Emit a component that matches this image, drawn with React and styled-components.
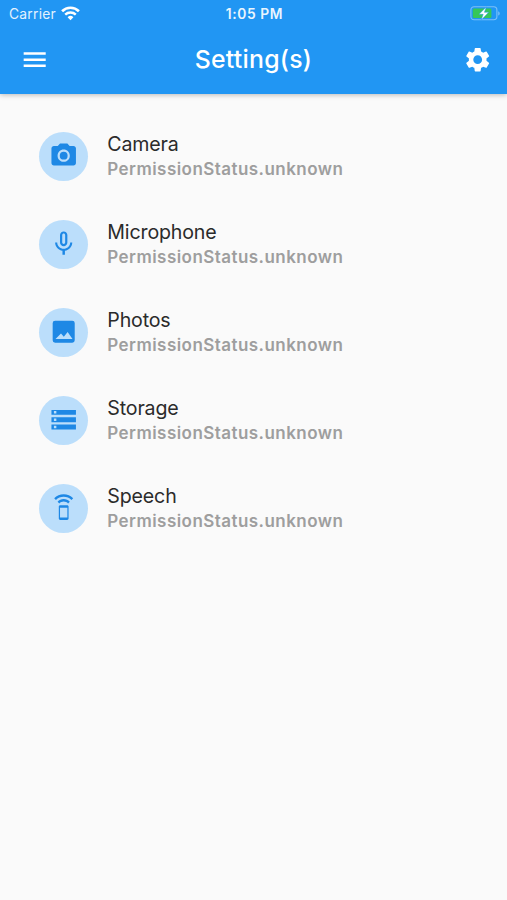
import styled, { createGlobalStyle } from "styled-components";
import {
  MdMenu,
  MdMicNone,
  MdPhotoCamera,
  MdSettings,
  MdSpeakerPhone,
  MdStorage,
} from "react-icons/md";

const GlobalStyle = createGlobalStyle`
  * {
    box-sizing: border-box;
  }
  body {
    margin: 0;
    background-color: #fafafa;
    font-family: Inter, "Liberation Sans", sans-serif;
  }
  svg {
    display: block;
  }
`;

const Page = styled.div`
  min-height: 900px;
  background-color: #fafafa;
`;

const Header = styled.header`
  height: 93.5px;
  background-color: #2196f3;
  color: #fff;
  box-shadow: 0 1px 5px rgba(0, 0, 0, 0.26);
`;

const StatusBar = styled.div`
  height: 25px;
  padding: 2px 7px 0 9px;
  display: grid;
  grid-template-columns: 1fr auto 1fr;
  align-items: center;
  font-size: 13.8px;
  line-height: 20px;
`;

const Carrier = styled.div`
  display: flex;
  align-items: center;
  gap: 5px;
  color: #e3f2fe;
  letter-spacing: 0.25px;
`;

const Clock = styled.div`
  font-weight: 600;
  font-size: 13.8px;
  letter-spacing: 0.6px;
  color: #e9f5fe;
`;

const Battery = styled.div`
  justify-self: end;
`;

const AppBar = styled.div`
  height: 68px;
  padding: 1px 15px 0 20px;
  display: grid;
  grid-template-columns: 1fr auto 1fr;
  align-items: center;
`;

const Title = styled.h1`
  margin: 0 5px 1px 0;
  font-size: 24.8px;
  line-height: 30px;
  font-weight: 500;
  letter-spacing: 0.25px;
`;

const IconButton = styled.button`
  justify-self: ${({ $end }) => ($end ? "end" : "start")};
  padding: 0;
  border: none;
  background: none;
  color: inherit;
  cursor: pointer;
  > svg {
    width: 29.4px;
    height: 29.4px;
  }
`;

const List = styled.ul`
  list-style: none;
  margin: 0;
  padding: 18.5px 38.8px 0;
`;

const Item = styled.li`
  height: 88px;
  display: flex;
  align-items: center;
  gap: 19.5px;
`;

const Avatar = styled.div`
  width: 49px;
  height: 49px;
  flex-shrink: 0;
  border-radius: 50%;
  background-color: #bbdefb;
  color: #1e88e5;
  display: flex;
  align-items: center;
  justify-content: center;
  > svg {
    width: 29.4px;
    height: 29.4px;
  }
`;

const ItemName = styled.div`
  font-size: 19.6px;
  line-height: 26px;
  letter-spacing: -0.15px;
  color: #2b2b2b;
`;

const ItemStatus = styled.div`
  font-size: 17px;
  line-height: 25px;
  font-weight: 600;
  letter-spacing: 0.45px;
  color: #9e9e9e;
`;

function WifiIcon() {
  return (
    <svg width="19" height="15" viewBox="0 0 19 15" fill="none" stroke="#fff">
      <path d="M1.1 5.2a12 12 0 0 1 16.8 0" strokeWidth="2.7" />
      <path d="M4.2 8.6a7.6 7.6 0 0 1 10.6 0" strokeWidth="2.4" />
      <path d="M9.5 14.2 6.6 11.2a4.2 4.2 0 0 1 5.8 0z" fill="#fff" stroke="none" />
    </svg>
  );
}

function BatteryIcon() {
  return (
    <svg width="30" height="15" viewBox="0 0 30 15">
      <rect x="0.9" y="0.8" width="26" height="13" rx="3.2" fill="none" stroke="#7cc0f8" strokeWidth="1.1" />
      <path d="M28.2 5.2v4.4c2-.9 2-3.5 0-4.4z" fill="#7cc0f8" />
      <rect x="2.8" y="2.5" width="18.6" height="9.6" rx="1.4" fill="#35c759" />
      <path d="M16.3 0.9 9 8.3h4.2L11.2 14 18.7 6.3h-4.3z" fill="#fff" stroke="#2196f3" strokeWidth="0.5" />
    </svg>
  );
}

function PhotoIcon() {
  return (
    <svg viewBox="0 0 24 24" fill="currentColor">
      <path
        fillRule="evenodd"
        d="M5 3h14a2 2 0 0 1 2 2v14a2 2 0 0 1-2 2H5a2 2 0 0 1-2-2V5a2 2 0 0 1 2-2zM5.3 18h13.9l-4-5.8-3.1 3.9-2.3-2.6z"
      />
    </svg>
  );
}

const permissions = [
  { name: "Camera", icon: MdPhotoCamera },
  { name: "Microphone", icon: MdMicNone },
  { name: "Photos", icon: PhotoIcon },
  { name: "Storage", icon: MdStorage },
  { name: "Speech", icon: MdSpeakerPhone },
];

function PermissionItem({ name, icon: Icon, status = "PermissionStatus.unknown" }) {
  return (
    <Item>
      <Avatar>
        <Icon />
      </Avatar>
      <div>
        <ItemName>{name}</ItemName>
        <ItemStatus>{status}</ItemStatus>
      </div>
    </Item>
  );
}

function App() {
  return (
    <Page>
      <GlobalStyle />
      <Header>
        <StatusBar>
          <Carrier>
            Carrier
            <WifiIcon />
          </Carrier>
          <Clock>1:05 PM</Clock>
          <Battery>
            <BatteryIcon />
          </Battery>
        </StatusBar>
        <AppBar>
          <IconButton aria-label="Menu">
            <MdMenu />
          </IconButton>
          <Title>Setting(s)</Title>
          <IconButton $end aria-label="Settings">
            <MdSettings />
          </IconButton>
        </AppBar>
      </Header>
      <List>
        {permissions.map((permission) => (
          <PermissionItem key={permission.name} {...permission} />
        ))}
      </List>
    </Page>
  );
}

export default App;
